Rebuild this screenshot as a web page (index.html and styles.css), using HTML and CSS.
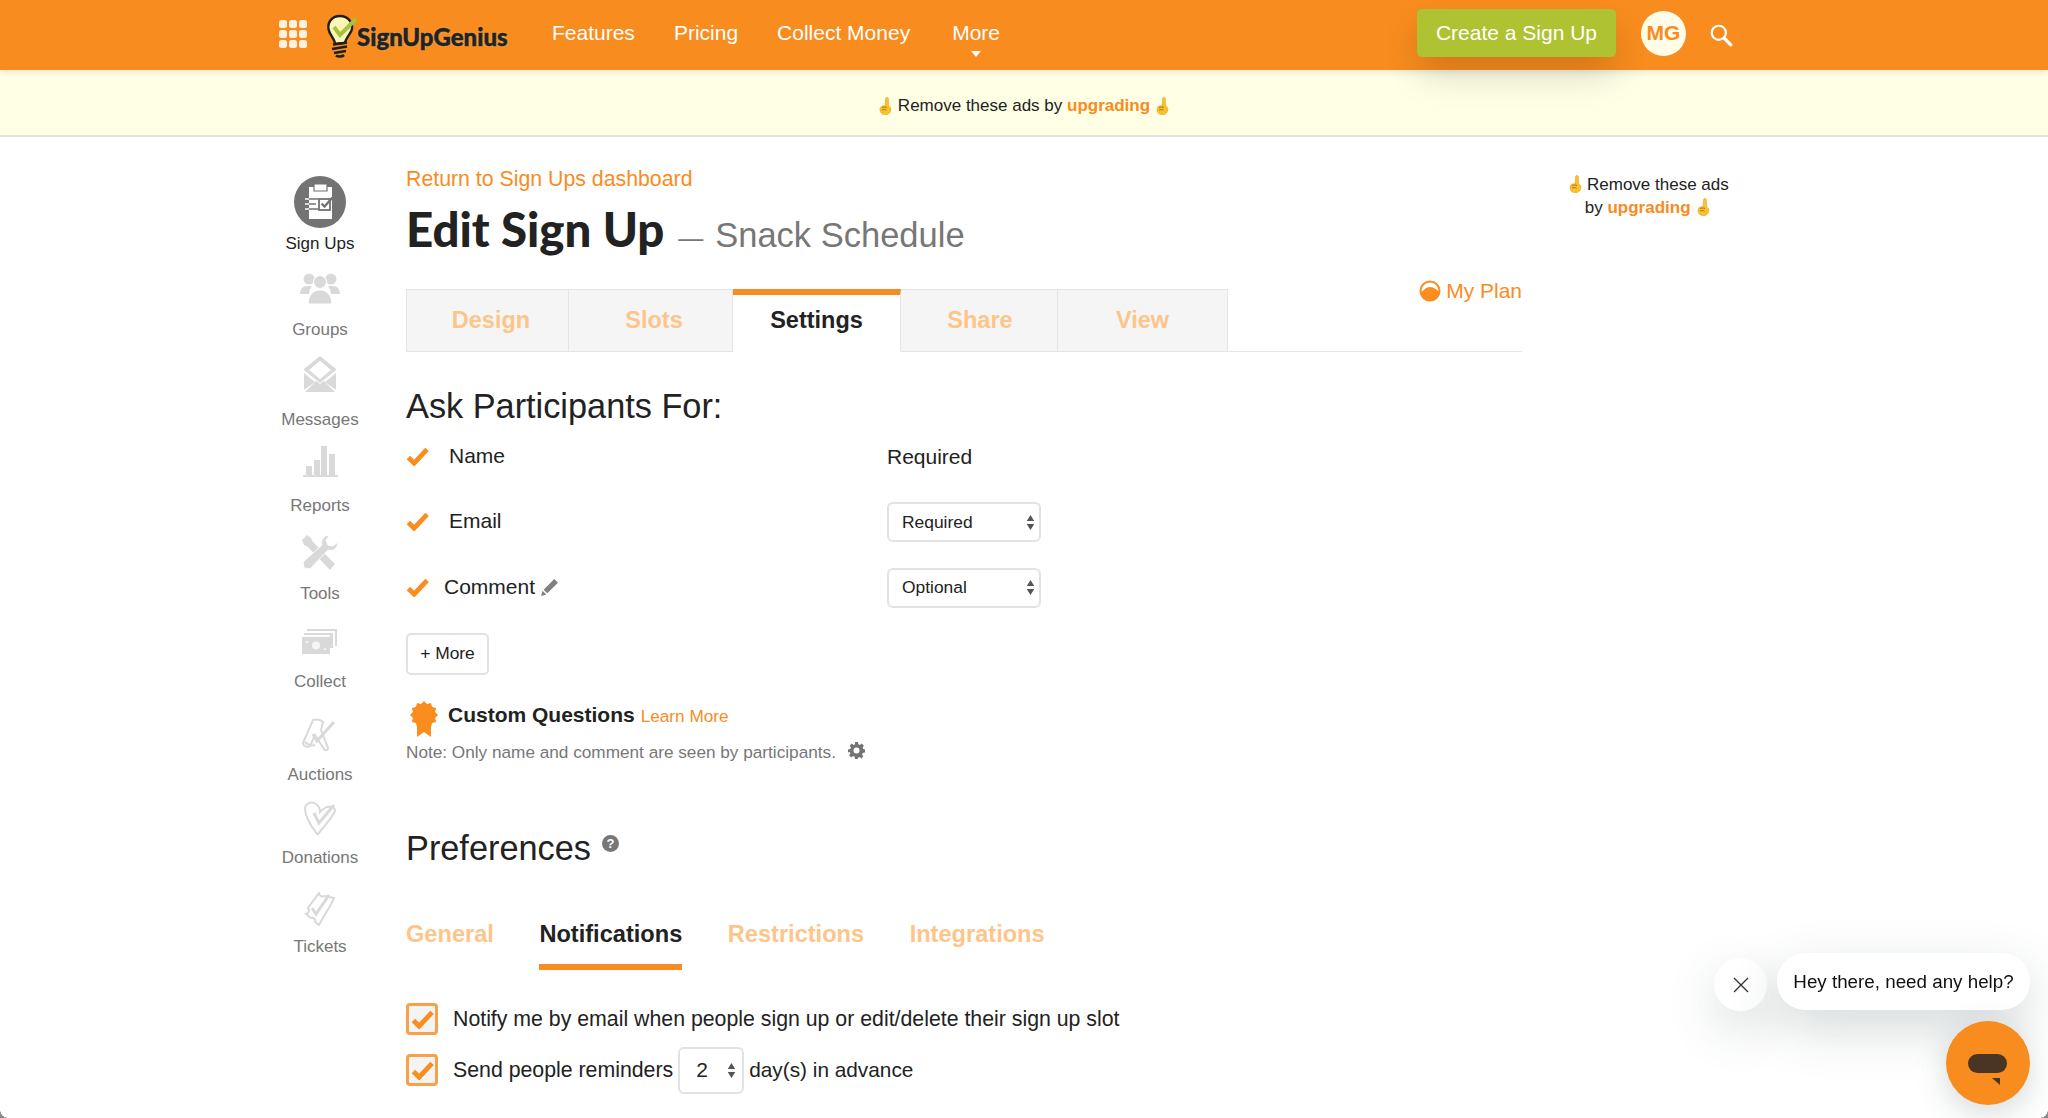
FILE: index.html
```html
<!DOCTYPE html>
<html lang="en">
<head>
<meta charset="utf-8">
<title>Edit Sign Up</title>
<link rel="stylesheet" href="styles.css">
</head>
<body>
<svg class="defs" width="0" height="0" aria-hidden="true">
  <defs>
    <symbol id="point" viewBox="0 0 13 18">
      <path d="M7.300.6c1-.5 2 0 2.100 1.100l.3 7.300c1.300.5 2.200 1.500 2.200 3.200 0 3.200-2.200 5.500-5.300 5.500-3 0-5.300-1.600-5.600-4.300-.2-1.500.2-3.200 1.300-4 .9-.7 2.500-.8 3.700-.7l.5-6.900c0-.5.300-1 .8-1.200z" fill="#f8c12d" stroke="#e39f1c" stroke-width=".5"/>
      <path d="M3 10.500c1.500-.6 3.500-.6 5 0M3 13c1.500-.6 3.500-.5 4.500.2" stroke="#94610f" stroke-width=".8" fill="none"/>
    </symbol>
    <symbol id="check" viewBox="0 0 24 20">
      <path d="M2.500 11.500l6 6L22 3" fill="none" stroke="#f98d1e" stroke-width="5"/>
    </symbol>
    <symbol id="updown" viewBox="0 0 8 14">
      <path d="M4 0l3.500 5.500h-7zM4 14L.5 8.500h7z" fill="#555"/>
    </symbol>
  </defs>
</svg>

<header class="topbar">
  <div class="topbar-inner">
    <div class="apps">
      <i></i><i></i><i></i><i></i><i></i><i></i><i></i><i></i><i></i>
    </div>
    <a class="logo">
      <svg class="bulb" width="32" height="44" viewBox="0 0 32 44">
        <path d="M14 2C6 2 1.500 8 2.500 15c.6 4.500 4.500 8 6 12.500l.5 2.500 10-1c.5-4 4.500-8 6.500-12.500C28 9 22 2 14 2z" fill="#fbf6b8" stroke="#1f1f1f" stroke-width="2.400"/>
        <path d="M8 13l6 8L30 5" fill="none" stroke="#a5c43a" stroke-width="4"/>
        <path d="M7 30.500l14-2M6 35l15-2.500M8 39l12-2" stroke="#1f1f1f" stroke-width="2.600" fill="none"/>
        <path d="M10 41.500c2 1.500 6 1.500 8-.5" stroke="#1f1f1f" stroke-width="2.600" fill="none"/>
      </svg>
      <span class="logo-text">SignUpGenius</span>
    </a>
    <nav class="mainnav">
      <a>Features</a>
      <a>Pricing</a>
      <a>Collect Money</a>
      <a class="more">More</a>
    </nav>
    <a class="create">Create a Sign Up</a>
    <span class="avatar">MG</span>
    <svg class="search" width="24" height="24" viewBox="0 0 22 22">
      <circle cx="9" cy="9" r="6.500" fill="none" stroke="#fff" stroke-width="2"/>
      <path d="M14 14l6 6" stroke="#fff" stroke-width="3" stroke-linecap="round"/>
    </svg>
  </div>
</header>

<div class="adbar">
  <svg class="emoji"><use href="#point"/></svg>
  <span>Remove these ads by <a class="strong-link">upgrading</a></span>
  <svg class="emoji"><use href="#point"/></svg>
</div>

<div class="page">
  <aside class="sidenav">
    <a class="sideitem current">
      <span class="sideicon">
        <svg width="52" height="52" viewBox="0 0 52 52">
          <circle cx="26" cy="26" r="26" fill="#737373"/>
          <path d="M15 11h23v32H15z" fill="#fff"/>
          <path d="M20 8h13v7H20z" fill="#fff" stroke="#737373" stroke-width="1.200"/>
          <path d="M11 23h13M11 28h11M11 33h13" stroke="#737373" stroke-width="1.600"/>
          <path d="M11 23h4M11 28h4M11 33h4" stroke="#fff" stroke-width="1.600"/>
          <rect x="25" y="23" width="11" height="11" fill="#fff" stroke="#737373" stroke-width="1.800"/>
          <path d="M27.500 27.500l3 3 8-9" fill="none" stroke="#737373" stroke-width="2.400"/>
        </svg>
      </span>
      <span class="sidelabel">Sign Ups</span>
    </a>
    <a class="sideitem">
      <span class="sideicon">
        <svg class="ic-groups" width="40" height="32" viewBox="0 0 40 32" fill="#d9d9d9">
          <circle cx="9" cy="7" r="5.500"/><circle cx="31" cy="7" r="5.500"/>
          <path d="M0 22c0-5 3-8 7-8h5c-1.500 2-3 5-3 8H0zM40 22c0-5-3-8-7-8h-5c1.500 2 3 5 3 8h9z"/>
          <circle cx="20" cy="10" r="6.500" stroke="#fff" stroke-width="1.200"/>
          <path d="M8 32c0-9 5-14 12-14s12 5 12 14z" stroke="#fff" stroke-width="1.200"/>
        </svg>
      </span>
      <span class="sidelabel">Groups</span>
    </a>
    <a class="sideitem">
      <span class="sideicon">
        <svg class="ic-up" width="32" height="36" viewBox="0 0 32 36" fill="#d9d9d9">
          <path d="M16 0l16 13v1L16 27 0 14v-1zM16 5L5 14l11 9 11-9z"/>
          <path d="M0 17l11 9L0 34zM32 17l-11 9 11 8zM16 28l4-3 11 11H1l11-11z"/>
        </svg>
      </span>
      <span class="sidelabel">Messages</span>
    </a>
    <a class="sideitem">
      <span class="sideicon">
        <svg class="ic-up" width="35" height="31" viewBox="0 0 35 31" fill="#d9d9d9">
          <path d="M3 20h6v9H3zM11 14h6v15h-6zM18 0h6v29h-6zM26 8h6v21h-6zM0 29h35v2H0z"/>
        </svg>
      </span>
      <span class="sidelabel">Reports</span>
    </a>
    <a class="sideitem">
      <span class="sideicon">
        <svg width="36" height="36" viewBox="0 0 36 36" fill="#d9d9d9">
          <path d="M5 0l4 3 2 4L33 29l-5 6L6 12 2 10 0 5z"/>
          <path d="M36 7c0 6-5 10-10 8L8 34l-6-1-1-6 19-17c-2-5 2-10 8-10l-4 5 2 5 5 1z" stroke="#fff" stroke-width="1"/>
        </svg>
      </span>
      <span class="sidelabel">Tools</span>
    </a>
    <a class="sideitem">
      <span class="sideicon">
        <svg width="36" height="26" viewBox="0 0 36 26">
          <path d="M5 4V1h30v17h-2V3H5zM2 8V5h29v15h-3V7H2z" fill="#d9d9d9"/>
          <path d="M0 9h28v17H0z" fill="#d9d9d9"/>
          <circle cx="14" cy="17.500" r="4" fill="#f5f5f5"/>
          <path d="M4 13h3l-3 3zM24 22h-3l3-3z" fill="#f5f5f5"/>
        </svg>
      </span>
      <span class="sidelabel">Collect</span>
    </a>
    <a class="sideitem">
      <span class="sideicon">
        <svg class="ic-auctions" width="36" height="36" viewBox="0 0 36 36" fill="none" stroke="#d9d9d9" stroke-width="2">
          <path d="M11 2c4-1 8 0 10 2l-2 8 7 18c0 2-3 3-4 1l-9-14-5 11c-3 2-7 0-7-3z"/>
          <path d="M11 16l4 7L32 4" stroke-width="3"/>
          <path d="M3 24c3 3 7 4 10 3"/>
        </svg>
      </span>
      <span class="sidelabel">Auctions</span>
    </a>
    <a class="sideitem">
      <span class="sideicon">
        <svg class="ic-donations" width="32" height="34" viewBox="0 0 32 34" fill="none" stroke="#d9d9d9" stroke-width="2">
          <path d="M13 33C7 25 1 15 1 8c0-6 7-8 11-5 3 2 4 5 4 8 3-3 6-6 11-5 4 1 5 3 3 6-4 7-10 14-16 21z"/>
          <path d="M10 12l5 10L30 4" stroke-width="3"/>
        </svg>
      </span>
      <span class="sidelabel">Donations</span>
    </a>
    <a class="sideitem">
      <span class="sideicon">
        <svg class="ic-tickets" width="32" height="34" viewBox="0 0 32 34" fill="none" stroke="#d9d9d9" stroke-width="2">
          <path d="M15 1c0 3 3 4 6 3l9 2c-2 6-8 14-15 27l-4-3c1-3-1-5-4-4L2 22c3-1 4-4 2-6z"/>
          <path d="M8 16l4 6L25 3" stroke-width="3"/>
        </svg>
      </span>
      <span class="sidelabel">Tickets</span>
    </a>
  </aside>

  <main class="content">
    <a class="backlink">Return to Sign Ups dashboard</a>
    <h1 class="title"><span class="title-main">Edit Sign Up</span><span class="title-dash">—</span><span class="title-sub">Snack Schedule</span></h1>

    <div class="tabs">
      <a class="tab tab-design">Design</a>
      <a class="tab tab-slots">Slots</a>
      <a class="tab tab-settings active">Settings</a>
      <a class="tab tab-share">Share</a>
      <a class="tab tab-view">View</a>
      <a class="myplan">
        <svg width="22" height="22" viewBox="0 0 22 22">
          <circle cx="11" cy="11" r="9.500" fill="#fff" stroke="#f98d1e" stroke-width="2"/>
          <path d="M2 12c3-1 4-5 9-5s6 3 9 4c0 5-4 10-9 10s-9-4-9-9z" fill="#f98d1e"/>
        </svg>
        My Plan
      </a>
    </div>

    <h2 class="section">Ask Participants For:</h2>

    <div class="fields">
      <div class="field">
        <div class="field-name"><svg class="tick"><use href="#check"/></svg><span class="indent">Name</span></div>
        <span class="field-plain">Required</span>
      </div>
      <div class="field">
        <div class="field-name"><svg class="tick"><use href="#check"/></svg><span class="indent">Email</span></div>
        <div class="select"><span>Required</span><svg class="updown"><use href="#updown"/></svg></div>
      </div>
      <div class="field">
        <div class="field-name"><svg class="tick"><use href="#check"/></svg><span class="indent-small">Comment</span>
          <svg class="pencil" width="18" height="18" viewBox="0 0 17 17"><path d="M12.500 1l3.500 3.500L6 14.500 2.500 11zM1.500 12l3.500 3.500L0 17z" fill="#808080"/></svg>
        </div>
        <div class="select"><span>Optional</span><svg class="updown"><use href="#updown"/></svg></div>
      </div>
    </div>

    <a class="btn-more">+ More</a>

    <div class="custom">
      <svg class="badge" width="28" height="36" viewBox="0 0 28 36">
        <path d="M7 24v12l7-5 7 5V24z" fill="#f98d1e"/>
        <path d="M14 0l3 2.900 4-1 1.100 4 4 1.100-1 4 2.900 3-2.900 3 1 4-4 1.100-1.100 4-4-1-3 2.900-3-2.900-4 1-1.100-4-4-1.100 1-4-2.900-3 2.900-3-1-4 4-1.100 1.100-4 4 1z" fill="#f98d1e"/>
      </svg>
      <strong class="custom-title">Custom Questions</strong>
      <a class="learn">Learn More</a>
    </div>
    <p class="note">Note: Only name and comment are seen by participants.
      <svg class="gear" width="17" height="17" viewBox="0 0 17 17"><path d="M7 0h3l.4 2.300 1.500.6 1.900-1.300 2.100 2.100-1.300 1.900.6 1.500L17 7.500v3l-2.300.4-.6 1.500 1.300 1.900-2.100 2.100-1.900-1.300-1.500.6L10 17H7l-.4-2.300-1.500-.6-1.900 1.300-2.100-2.100 1.300-1.900-.6-1.500L0 10.500v-3l2.300-.4.6-1.500L1.600 3.700l2.100-2.100 1.900 1.300 1.500-.6zM8.500 5.500a3 3 0 1 0 0 6 3 3 0 0 0 0-6z" fill="#737373" fill-rule="evenodd"/></svg>
    </p>

    <h2 class="section prefs">Preferences
      <svg class="help" width="17" height="17" viewBox="0 0 17 17"><circle cx="8.500" cy="8.500" r="8.500" fill="#777"/><text x="8.500" y="13" text-anchor="middle" class="help-mark">?</text></svg>
    </h2>

    <div class="subtabs">
      <a class="subtab">General</a>
      <a class="subtab active">Notifications</a>
      <a class="subtab">Restrictions</a>
      <a class="subtab">Integrations</a>
    </div>

    <div class="option">
      <span class="box"><svg class="boxtick"><use href="#check"/></svg></span>
      <span>Notify me by email when people sign up or edit/delete their sign up slot</span>
    </div>
    <div class="option">
      <span class="box"><svg class="boxtick"><use href="#check"/></svg></span>
      <span>Send people reminders</span>
      <div class="select select-num"><span>2</span><svg class="updown"><use href="#updown"/></svg></div>
      <span class="days">day(s) in advance</span>
    </div>
  </main>

  <aside class="sidead">
    <div><svg class="emoji"><use href="#point"/></svg> Remove these ads</div>
    <div class="sidead-second">by <a class="strong-link">upgrading</a> <svg class="emoji"><use href="#point"/></svg></div>
  </aside>
</div>

<div class="chat">
  <button class="chat-close" aria-label="Close">
    <svg width="16" height="16" viewBox="0 0 16 16"><path d="M1 1l14 14M15 1L1 15" stroke="#333" stroke-width="1.300"/></svg>
  </button>
  <div class="chat-bubble">Hey there, need any help?</div>
  <div class="chat-launcher">
    <svg width="40" height="32" viewBox="0 0 40 32"><rect width="39" height="19" rx="9.500" fill="#4a3524"/><path d="M24 24h8v7z" fill="#4a3524"/></svg>
  </div>
</div>
<div class="corner corner-left"></div>
<div class="corner corner-right"></div>
</body>
</html>
```

FILE: styles.css
```css
* { box-sizing: border-box; }
html, body { margin: 0; padding: 0; }
body {
  width: 2048px;
  height: 1118px;
  overflow: hidden;
  background: #fff;
  color: #222;
  font-family: "Liberation Sans", Arial, sans-serif;
}
a { text-decoration: none; }
.defs { display: block; height: 0; }

/* top bar */
.topbar {
  position: relative;
  z-index: 2;
  height: 70px;
  background: #f88c1e;
  box-shadow: 0 1px 8px rgba(0, 0, 0, .12);
}
.topbar-inner {
  display: flex;
  align-items: center;
  height: 100%;
  padding-left: 279px;
}
.apps {
  display: grid;
  grid-template-columns: repeat(3, 8px);
  grid-auto-rows: 8px;
  gap: 2px;
  margin-bottom: 3px;
}
.apps i { background: #fff1dd; border-radius: 2.500px; }
.logo { display: flex; align-items: flex-end; margin-left: 19px; height: 46px; width: 183px; }
.bulb { flex: none; }
.logo-text {
  margin: 0 0 7px -1px;
  font-family: Lato, sans-serif;
  font-weight: 900;
  font-size: 24px;
  letter-spacing: 0;
  color: #222;
  -webkit-text-stroke: .5px #222;
  text-shadow: 0 0 2px rgba(255, 245, 220, .6);
}
.mainnav { display: flex; gap: 39px; margin-left: 43px; margin-bottom: 4px; }
.mainnav a { color: #fff; font-size: 21px; }
.mainnav .more { position: relative; margin-left: 3px; }
.mainnav .more::after {
  content: "";
  position: absolute;
  left: 50%;
  top: 30px;
  margin-left: -5px;
  border: 5px solid transparent;
  border-top: 6px solid #fff;
  border-bottom: 0;
}
.create {
  margin-left: 417px;
  width: 199px;
  height: 48px;
  margin-bottom: 4px;
  display: flex;
  align-items: center;
  justify-content: center;
  background: #afc332;
  color: #fff;
  font-size: 21px;
  border-radius: 5px;
  box-shadow: 0 18px 36px -2px rgba(0, 0, 0, .16);
}
.avatar {
  margin-left: 25px;
  margin-bottom: 4px;
  width: 45px;
  height: 45px;
  border-radius: 50%;
  background: #fffde8;
  color: #f88c1e;
  font-weight: 700;
  font-size: 21px;
  display: flex;
  align-items: center;
  justify-content: center;
}
.search { margin-left: 23px; }

/* ad bar */
.adbar {
  height: 67px;
  background: #ffffe6;
  border-bottom: 2px solid #e2e2e2;
  display: flex;
  align-items: center;
  justify-content: center;
  gap: 6px;
  font-size: 17px;
  padding-top: 6px;
}
.emoji { width: 13px; height: 18px; vertical-align: -3px; }
.strong-link { color: #f88c1e; font-weight: 700; }

/* page */
.page { display: flex; padding-left: 279px; }

.sidenav {
  width: 82px;
  flex: none;
  padding-top: 39px;
  display: flex;
  flex-direction: column;
  gap: 16px;
}
.sideitem { display: flex; flex-direction: column; align-items: center; height: 72px; }
.sideitem.current { margin-bottom: 4px; }
.sideicon { height: 52px; display: flex; align-items: center; justify-content: center; }
.sidelabel { font-size: 17px; line-height: 20px; margin-top: 10.500px; color: #777; white-space: nowrap; }
.current .sidelabel { color: #222; margin-top: 6px; }
.ic-groups { margin-bottom: 2px; }
.ic-up { margin-bottom: 7px; }
.ic-auctions { margin-top: 10px; }
.ic-donations { margin-top: 3px; }
.ic-tickets { margin-top: 8px; }

.content { width: 1116px; margin-left: 45px; flex: none; padding-top: 30px; }
.backlink { display: block; color: #f88c1e; font-size: 21.300px; line-height: 24px; }
.title { margin: 5px 0 0; height: 67px; display: flex; align-items: baseline; font-weight: 400; }
.title-main { font-family: Lato, sans-serif; font-weight: 900; font-size: 47.400px; line-height: 66px; color: #222; }
.title-dash { color: #777; font-size: 25px; margin-left: 14px; }
.title-sub { color: #777; font-size: 34.500px; margin-left: 12px; }

.tabs {
  margin-top: 26px;
  display: flex;
  height: 63px;
  border-bottom: 1px solid #e6e6e6;
  position: relative;
}
.tab {
  height: 63px;
  display: flex;
  align-items: center;
  justify-content: center;
  background: #f5f5f5;
  border: 1px solid #e4e4e4;
  border-left: 0;
  font-size: 23.500px;
  font-weight: 700;
  color: #fdc58a;
}
.tab-design { width: 163px; border-left: 1px solid #e4e4e4; padding-left: 7px; }
.tab-slots { width: 164px; padding-left: 7px; }
.tab-settings { width: 168px; }
.tab-share { width: 157px; padding-left: 2px; }
.tab-view { width: 170px; }
.tab.active {
  background: #fff;
  color: #222;
  border-top: 6px solid #f88c1e;
  border-bottom: 1px solid #fff;
  padding-bottom: 5px;
}
.myplan {
  margin-left: auto;
  align-self: flex-start;
  display: flex;
  align-items: center;
  gap: 5px;
  color: #f88c1e;
  font-size: 21px;
  margin-top: -10px;
}

.section { margin: 0; font-weight: 400; font-size: 34.300px; line-height: 42px; color: #222; }
.tabs + .section { margin-top: 33px; }

.fields { margin-top: -3px; width: 635px; }
.field { display: flex; align-items: center; justify-content: space-between; height: 65.500px; }
.field-name { display: flex; align-items: center; font-size: 21px; margin-bottom: 2px; }
.field-plain { font-size: 21px; width: 154px; }
.tick { width: 23px; height: 20px; margin-right: 20px; }
.indent { display: block; }
.indent-small { margin-left: -5px; }
.pencil { margin-left: 6px; }

.select {
  width: 154px;
  height: 40px;
  border: 2px solid #e2e2e2;
  border-radius: 6px;
  display: flex;
  align-items: center;
  justify-content: space-between;
  padding: 0 4px 0 13px;
  font-size: 17.400px;
  background: #fff;
}
.updown { width: 9px; height: 15px; }

.btn-more {
  display: flex;
  align-items: center;
  justify-content: center;
  width: 83px;
  height: 42px;
  margin-top: 12px;
  border: 2px solid #e2e2e2;
  border-radius: 5px;
  font-size: 17.400px;
}

.custom { display: flex; align-items: center; margin-top: 22px; height: 36px; padding-left: 4px; }
.badge { flex: none; margin-right: 10px; margin-top: 8px; }
.custom-title { font-size: 21px; }
.learn { color: #f88c1e; font-size: 17.200px; margin-left: 6px; margin-top: 3px; }
.note { margin: 9px 0 0; font-size: 17.200px; color: #777; line-height: 20px; }
.gear { margin-left: 7px; vertical-align: -1px; }

.prefs { margin-top: 65px; display: flex; align-items: flex-start; gap: 11px; }
.help { margin-top: 8px; }
.help-mark { font-size: 13px; font-weight: 700; fill: #fff; }

.subtabs { display: flex; gap: 45.500px; margin-top: 50px; height: 51px; }
.subtab { font-size: 23.600px; font-weight: 700; color: #fdc58a; height: 51px; line-height: 30px; }
.subtab.active { color: #222; border-bottom: 6px solid #f88c1e; }

.option { display: flex; align-items: center; font-size: 21.300px; height: 51px; gap: 5px; }
.subtabs + .option { margin-top: 24px; }
.days { font-size: 20.800px; }
.box {
  width: 32px;
  height: 32px;
  flex: none;
  margin-right: 10px;
  border: 3px solid #f9a04a;
  border-radius: 4px;
  background: #f4f4f4;
  display: flex;
  align-items: center;
  justify-content: center;
}
.boxtick { width: 23px; height: 20px; }
.select-num { width: 66px; height: 47px; padding: 0 6px 0 16px; font-size: 21px; }

.sidead { width: 174px; margin-left: 40px; padding-top: 37px; text-align: center; font-size: 17px; line-height: 22.500px; white-space: nowrap; }
.sidead-second { padding-right: 3px; }
.sidead-second .emoji { margin-left: 2px; }

/* chat widget */
.chat { position: fixed; right: 18px; bottom: 13px; width: 316px; height: 152px; }
.chat-close {
  position: absolute;
  left: 0;
  top: 5px;
  width: 53px;
  height: 53px;
  padding: 0;
  border: 0;
  border-radius: 50%;
  background: #fff;
  display: flex;
  align-items: center;
  justify-content: center;
  box-shadow: 0 18px 50px rgba(60, 80, 80, .2);
}
.chat-bubble {
  position: absolute;
  right: 0;
  top: 0;
  width: 253px;
  height: 57px;
  border-radius: 28px;
  background: #fff;
  font-size: 18.800px;
  display: flex;
  align-items: center;
  justify-content: center;
  color: #111;
  box-shadow: 0 18px 50px rgba(60, 80, 80, .22);
}
.chat-launcher {
  position: absolute;
  right: 0;
  bottom: 0;
  width: 84px;
  height: 84px;
  border-radius: 50%;
  background: #f88c1e;
  display: flex;
  align-items: center;
  justify-content: center;
  padding-top: 14px;
  box-shadow: 0 8px 32px rgba(60, 80, 80, .22);
}

/* rounded window corners */
.corner { position: fixed; bottom: 0; width: 8px; height: 8px; }
.corner-left { left: 0; background: radial-gradient(circle at 100% 0, transparent 7.500px, #8a8a8a 8px); }
.corner-right { right: 0; background: radial-gradient(circle at 0 0, transparent 7.500px, #8a8a8a 8px); }
```
